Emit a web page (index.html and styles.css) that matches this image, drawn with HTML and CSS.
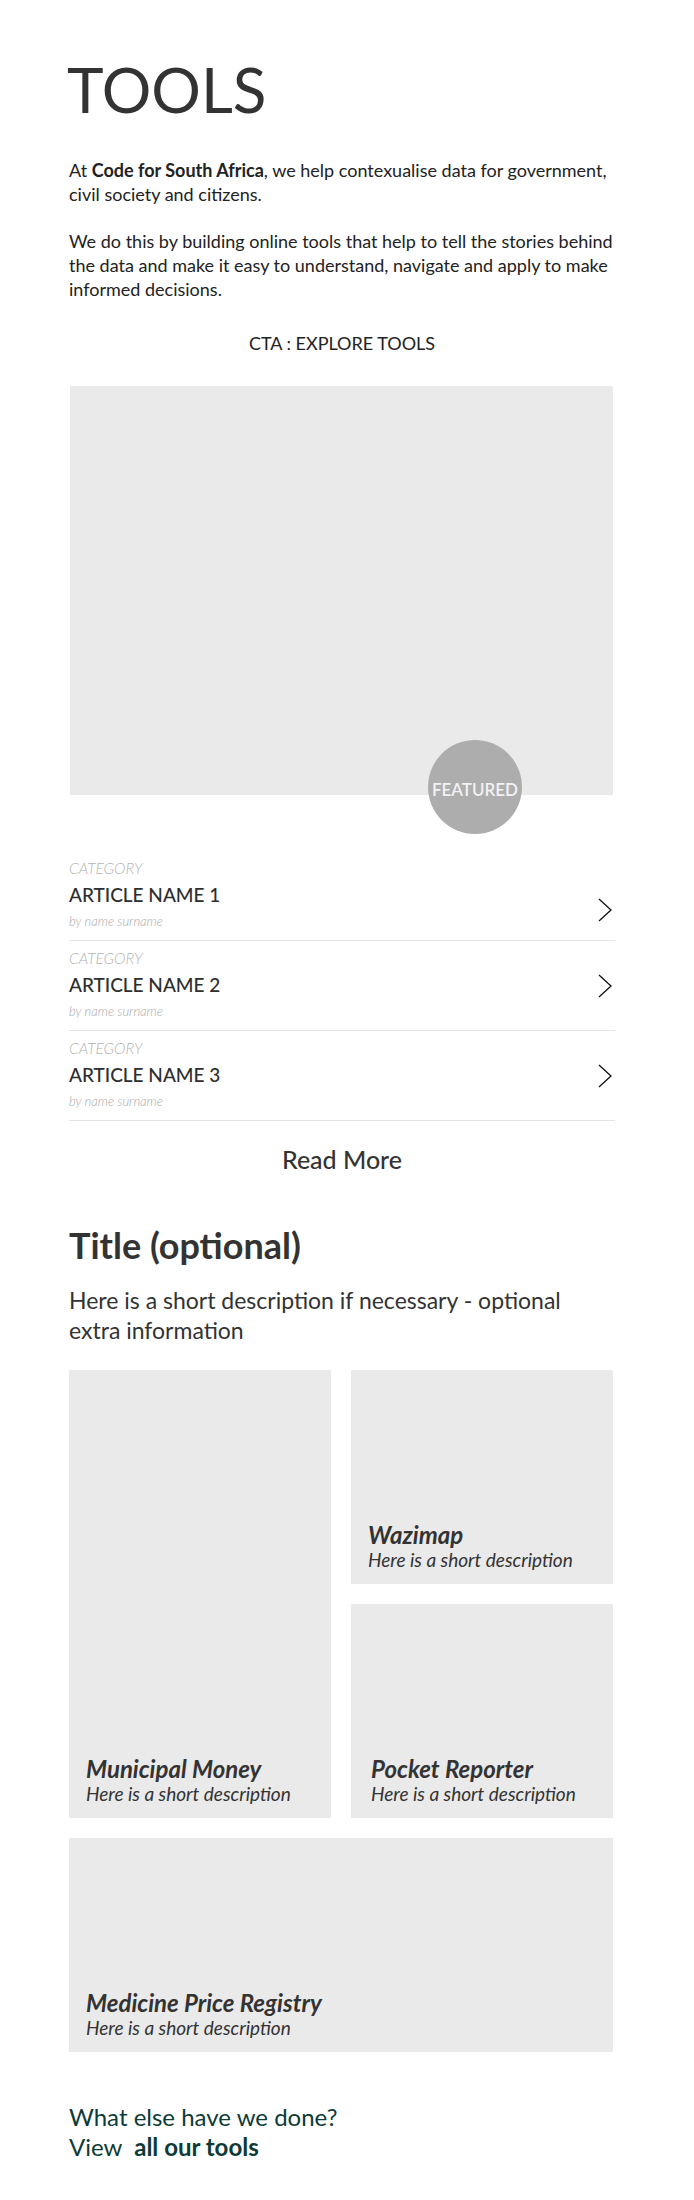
FILE: index.html
```html
<!DOCTYPE html>
<html lang="en">
<head>
<meta charset="utf-8">
<title>Tools</title>
<link rel="stylesheet" href="styles.css">
</head>
<body>
<main class="page">
  <h1 class="hero-title">TOOLS</h1>
  <p class="intro">At <strong>Code for South Africa</strong>, we help contexualise data for government, civil society and citizens.</p>
  <p class="intro">We do this by building online tools that help to tell the stories behind the data and make it easy to understand, navigate and apply to make informed decisions.</p>
  <div class="cta">CTA : EXPLORE TOOLS</div>

  <div class="featured">
    <div class="featured__badge">FEATURED</div>
  </div>

  <ul class="articles">
    <li class="article">
      <div class="article__body">
        <div class="article__cat">CATEGORY</div>
        <div class="article__name">ARTICLE NAME 1</div>
        <div class="article__by">by name surname</div>
      </div>
      <svg class="chevron chevron--low" viewBox="0 0 14 24" width="14" height="24" aria-hidden="true"><path d="M1 1 L13 12 L1 23" /></svg>
    </li>
    <li class="article">
      <div class="article__body">
        <div class="article__cat">CATEGORY</div>
        <div class="article__name">ARTICLE NAME 2</div>
        <div class="article__by">by name surname</div>
      </div>
      <svg class="chevron" viewBox="0 0 14 24" width="14" height="24" aria-hidden="true"><path d="M1 1 L13 12 L1 23" /></svg>
    </li>
    <li class="article">
      <div class="article__body">
        <div class="article__cat">CATEGORY</div>
        <div class="article__name">ARTICLE NAME 3</div>
        <div class="article__by">by name surname</div>
      </div>
      <svg class="chevron" viewBox="0 0 14 24" width="14" height="24" aria-hidden="true"><path d="M1 1 L13 12 L1 23" /></svg>
    </li>
  </ul>

  <div class="read-more">Read More</div>

  <h2 class="section-title">Title (optional)</h2>
  <p class="section-desc">Here is a short description if necessary - optional extra information</p>

  <div class="tiles">
    <div class="tile tile--tall">
      <div class="tile__name">Municipal Money</div>
      <div class="tile__desc">Here is a short description</div>
    </div>
    <div class="tile">
      <div class="tile__name">Wazimap</div>
      <div class="tile__desc">Here is a short description</div>
    </div>
    <div class="tile tile--inset">
      <div class="tile__name">Pocket Reporter</div>
      <div class="tile__desc">Here is a short description</div>
    </div>
    <div class="tile tile--wide">
      <div class="tile__name">Medicine Price Registry</div>
      <div class="tile__desc">Here is a short description</div>
    </div>
  </div>

  <div class="more">
    <div>What else have we done?</div>
    <div>View&nbsp; <strong>all our tools</strong></div>
  </div>
</main>
</body>
</html>
```
FILE: styles.css
```css
html, body {
  margin: 0;
  padding: 0;
  background: #ffffff;
}

body {
  font-family: Lato, "Open Sans", "Liberation Sans", sans-serif;
  color: #333333;
}

.page {
  padding: 51px 79px 40px 69px;
}

.hero-title {
  margin: 0 0 0 -2px;
  font-size: 62px;
  line-height: 76px;
  font-weight: 400;
  color: #333333;
}

.intro {
  margin: 31px 0 0;
  font-size: 18px;
  line-height: 24px;
  color: #222222;
}

.intro + .intro {
  margin-top: 23px;
}

.intro strong {
  font-weight: 700;
}

.cta {
  margin-top: 30px;
  text-align: center;
  font-size: 18px;
  line-height: 24px;
  color: #222222;
}

.featured {
  position: relative;
  margin: 31px 0 0 1px;
  width: 543px;
  height: 409px;
  background: #eaeaea;
}

.featured__badge {
  position: absolute;
  left: 358px;
  top: 354px;
  width: 94px;
  height: 94px;
  border-radius: 50%;
  background: #adadad;
  color: #f2f2f2;
  display: flex;
  align-items: center;
  justify-content: center;
  font-size: 17px;
  font-weight: 600;
  padding-top: 4px;
  box-sizing: border-box;
}

.articles {
  list-style: none;
  margin: 56px 0 0;
  padding: 0;
}

.article {
  display: flex;
  align-items: flex-start;
  padding: 7px 0 10px;
  border-bottom: 1px solid #e5e5e5;
}

.article__body {
  flex: 1;
}

.article__cat {
  font-size: 15.5px;
  line-height: 20px;
  font-style: italic;
  font-weight: 300;
  color: #b3b3b3;
}

.article__name {
  margin-top: 5px;
  font-size: 19px;
  line-height: 24px;
  font-weight: 500;
  color: #2e2e2e;
}

.article__by {
  margin-top: 5px;
  font-size: 13px;
  line-height: 18px;
  font-style: italic;
  font-weight: 300;
  color: #a8a8a8;
}

.chevron {
  flex: none;
  margin: 26px 3px 0 0;
  fill: none;
  stroke: #111111;
  stroke-width: 1.3;
}

.chevron--low {
  margin-top: 40px;
}

.read-more {
  margin-top: 23px;
  text-align: center;
  font-size: 25px;
  line-height: 30px;
  font-weight: 500;
  color: #333333;
}

.section-title {
  margin: 50px 0 0;
  font-size: 36px;
  line-height: 42px;
  font-weight: 700;
  color: #333333;
}

.section-desc {
  margin: 19px 0 0;
  font-size: 23px;
  line-height: 30px;
  color: #333333;
}

.tiles {
  margin-top: 25px;
  display: grid;
  grid-template-columns: 262px 262px;
  grid-template-rows: repeat(3, 214px);
  gap: 20px;
}

.tile {
  background: #eaeaea;
  display: flex;
  flex-direction: column;
  justify-content: flex-end;
  padding: 0 17px 12px;
}

.tile--tall {
  grid-row: span 2;
}

.tile--wide {
  grid-column: span 2;
}

.tile--inset {
  padding-left: 20px;
}

.tile__name {
  font-size: 24px;
  line-height: 26px;
  font-weight: 700;
  font-style: italic;
  color: #333333;
}

.tile__desc {
  font-size: 19px;
  line-height: 24px;
  font-style: italic;
  color: #333333;
}

.more {
  margin-top: 50px;
  font-size: 24px;
  line-height: 30px;
  color: #0d3b38;
}

.more strong {
  font-weight: 700;
}
```
